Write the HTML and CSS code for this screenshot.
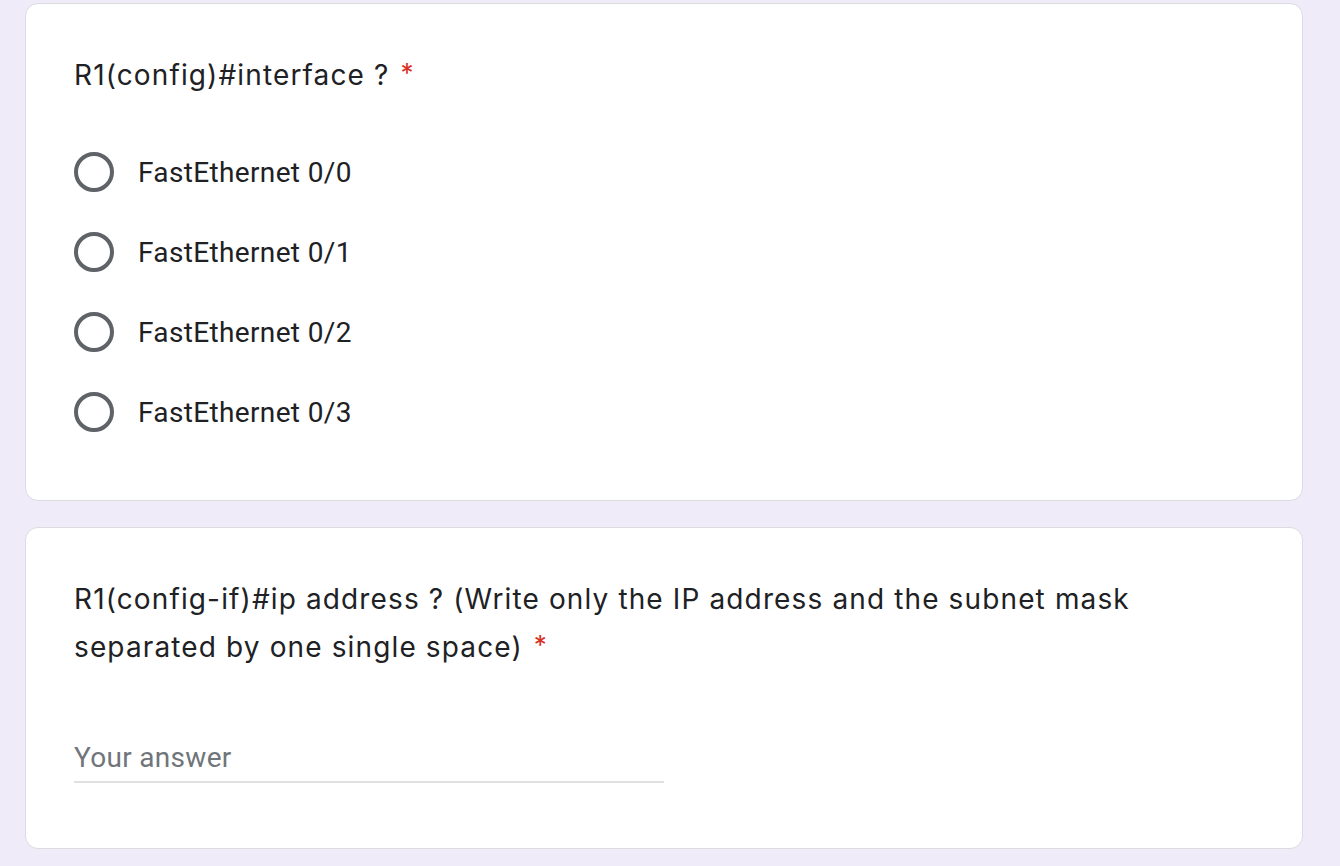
FILE: index.html
```html
<!DOCTYPE html>
<html>
<head>
<meta charset="utf-8">
<link rel="stylesheet" href="styles.css">
</head>
<body>
<div class="page">
  <div class="card card-choice">
    <div class="q-title">R1(config)#interface ? <span class="req">*</span></div>
    <div class="options">
      <div class="option"><span class="radio"></span><span class="opt-label">FastEthernet 0/0</span></div>
      <div class="option"><span class="radio"></span><span class="opt-label">FastEthernet 0/1</span></div>
      <div class="option"><span class="radio"></span><span class="opt-label">FastEthernet 0/2</span></div>
      <div class="option"><span class="radio"></span><span class="opt-label">FastEthernet 0/3</span></div>
    </div>
  </div>
  <div class="card card-text">
    <div class="q-title">R1(config-if)#ip address ? (Write only the IP address and the subnet mask<br>separated by one single space) <span class="req">*</span></div>
    <div class="answer">
      <div class="input">Your answer</div>
    </div>
  </div>
</div>
</body>
</html>
```
FILE: styles.css
```css
html, body {
  margin: 0;
  padding: 0;
  background: #f0ebf8;
}
.page {
  padding: 3px 0 0 25px;
  display: flex;
  flex-direction: column;
  gap: 26px;
  width: 1278px;
}
.card {
  background: #fff;
  border: 1px solid #dadce0;
  border-radius: 13px;
  padding: 47px 49px 47px 48px;
}
.card-choice {
  padding-bottom: 48px;
}
.card-text {
  padding-bottom: 48px;
}
.q-title {
  font-family: Inter, Roboto, "Liberation Sans", sans-serif;
  font-size: 28px;
  line-height: 48px;
  color: #202124;
  letter-spacing: 1.13px;
}
.req {
  color: #d93025;
  font-size: 26px;
  line-height: 0;
  vertical-align: 3px;
  padding-left: 2px;
}
.options {
  margin-top: 33px;
  display: flex;
  flex-direction: column;
}
.option {
  height: 80px;
  display: flex;
  align-items: center;
}
.radio {
  width: 32px;
  height: 32px;
  border: 4px solid #5f6368;
  border-radius: 50%;
  flex: none;
}
.opt-label {
  margin-left: 24px;
  font-family: Roboto, "Liberation Sans", sans-serif;
  font-size: 28px;
  letter-spacing: 0.35px;
  color: #202124;
}
.answer {
  padding-top: 71px;
  padding-bottom: 17px;
}
.input {
  width: 590px;
  height: 32px;
  line-height: 32px;
  padding-bottom: 7px;
  border-bottom: 2px solid #e0e0e0;
  font-family: Roboto, "Liberation Sans", sans-serif;
  font-size: 28px;
  letter-spacing: 0.3px;
  color: #70757a;
}
```
